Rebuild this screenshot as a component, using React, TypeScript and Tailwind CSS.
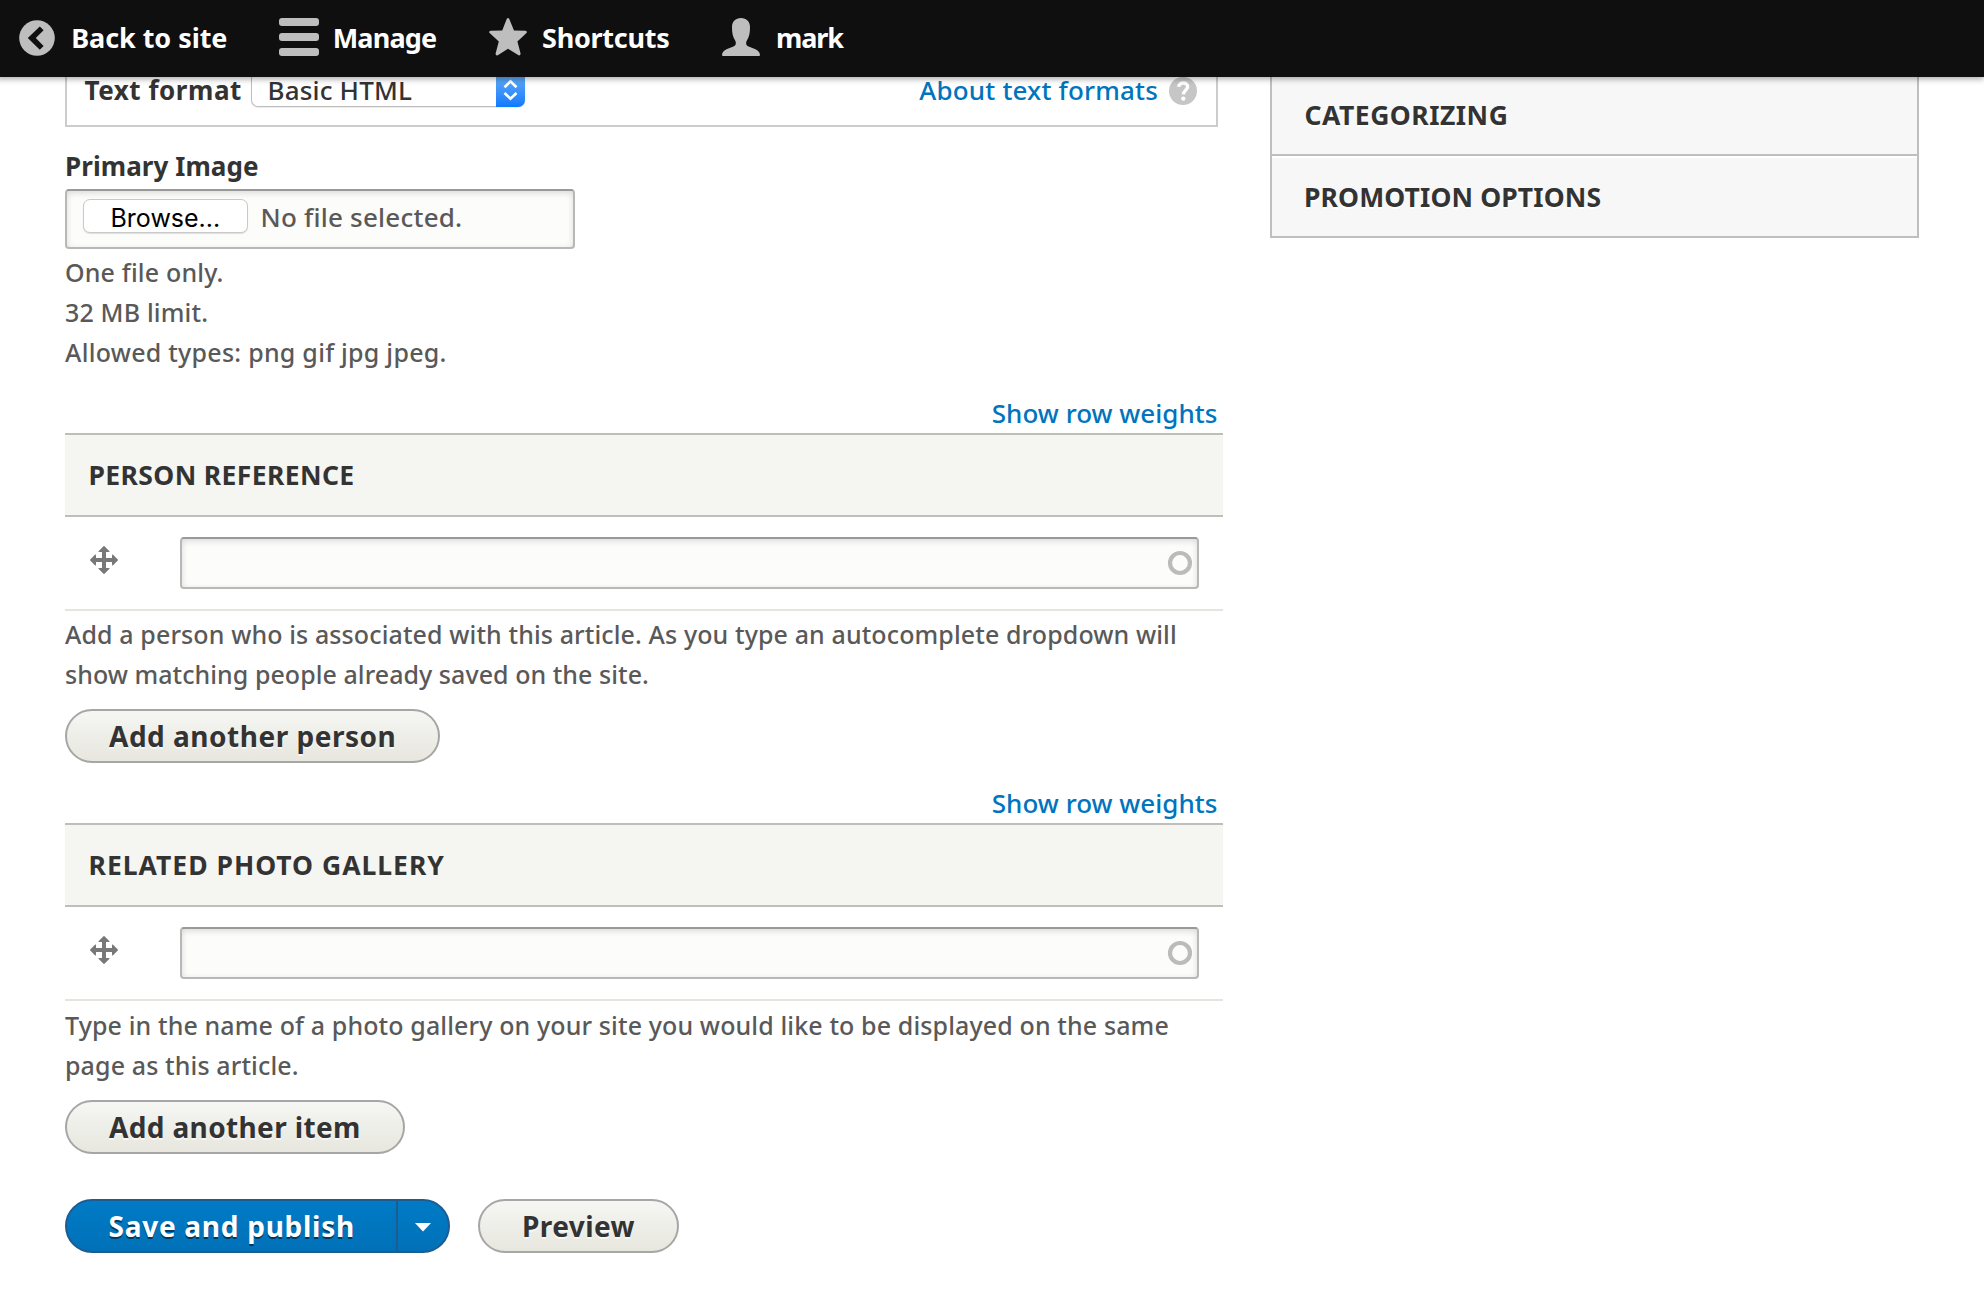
import type { ReactNode } from 'react';

function BackIcon() {
  return (
    <svg width="36" height="36" viewBox="0 0 36 36" className="shrink-0">
      <circle cx="18" cy="18" r="17.8" fill="#bebebe" />
      <path d="M8.8 18 L20.8 6.4 L24.6 10.2 L16.8 18 L24.6 26 L20.8 29.8 Z" fill="#0f0f0f" />
    </svg>
  );
}

function MenuIcon() {
  return (
    <svg width="40" height="38" viewBox="0 0 40 38" fill="#bebebe" className="shrink-0">
      <rect y="0" width="40" height="8" rx="3" />
      <rect y="15" width="40" height="8" rx="3" />
      <rect y="30" width="40" height="8" rx="3" />
    </svg>
  );
}

function StarIcon() {
  return (
    <svg width="38" height="38" viewBox="0 0 38 38" className="shrink-0">
      <path
        d="M17.7 1 Q19 -.8 20.3 1 L25 12.6 L36.6 12.8 Q38.8 13.4 37.2 15.3 L28.4 23.6 L31.6 35.4 Q31.7 37.9 29.6 37.3 L19 30.8 L8.8 37.3 Q6.4 37.9 6.6 35.4 L9.8 23.6 L.9 15.3 Q-.8 13.4 1.5 12.8 L13.2 12.6 Z"
        fill="#bebebe"
      />
    </svg>
  );
}

function PersonIcon() {
  return (
    <svg width="38" height="38" viewBox="0 0 38 38" className="shrink-0">
      <path
        d="M19 0 C24.5 0 28 3.6 28 9 C28 14.5 27.3 19 25 22.2 C23.6 24.5 23.8 27.4 26.6 28.6 L33.5 31.2 C36.5 32.6 37.8 34.4 38 37 Q38 38 37 38 L1 38 Q0 38 0 37 C.2 34.4 1.5 32.6 4.5 31.2 L11.4 28.6 C14.2 27.4 14.4 24.5 13 22.2 C10.7 19 10 14.5 10 9 C10 3.6 13.5 0 19 0 Z"
        fill="#bebebe"
      />
    </svg>
  );
}

function MoveIcon() {
  return (
    <svg width="32" height="32" viewBox="0 0 16 16" className="shrink-0">
      <path
        fill="#787878"
        d="M14.904 7.753l-2.373-2.372c-.291-.292-.529-.193-.529.22v1.399h-3v-3h1.398c.414 0 .512-.239.221-.53l-2.371-2.372c-.137-.136-.36-.136-.497 0l-2.372 2.372c-.292.292-.193.53.22.53h1.399v3h-3v-1.369c0-.413-.239-.511-.53-.22l-2.372 2.372c-.136.136-.136.359 0 .494l2.372 2.372c.291.292.53.193.53-.22v-1.429h3v3h-1.4c-.413 0-.511.238-.22.529l2.374 2.373c.137.137.36.137.495 0l2.373-2.373c.29-.291.19-.529-.222-.529h-1.398v-3h3v1.4c0 .412.238.511.529.219l2.373-2.371c.137-.137.137-.359 0-.495z"
      />
    </svg>
  );
}

const fieldStyle =
  'rounded-[4px] border-2 border-[#b8b8b8] border-t-[#999999] bg-[#fcfcfa] shadow-[inset_0_2px_6px_rgba(0,0,0,0.14)]';

const grayButton =
  'block h-[54px] rounded-full border-2 border-[#a6a6a6] bg-linear-to-b from-[#f6f6f3] to-[#e7e7df] text-left text-[28px] leading-[50px] font-bold whitespace-nowrap text-[#333333] [text-shadow:0_2px_0_rgba(255,255,255,0.6)]';

interface ReferenceFieldProps {
  title: string;
  titleClass: string;
  children: ReactNode;
}

function ReferenceField({ title, titleClass, children }: ReferenceFieldProps) {
  return (
    <>
      <div className="mb-[2px] flex justify-end pr-[5.5px]">
        <a className="text-[26px] leading-[36px] font-medium tracking-[0.03px] text-[#0074bd]">Show row weights</a>
      </div>
      <div className="flex h-[84px] items-center border-y-2 border-[#bfbfba] bg-[#f5f5f2] pl-[23.5px]">
        <h4 className={`text-[26.5px] leading-[80px] font-bold text-[#333333] ${titleClass}`}>{title}</h4>
      </div>
      <div className="flex h-[94px] items-start border-b-2 border-[#e6e4df] pl-[23px]">
        <div className="mt-[27px] w-[92px]">
          <MoveIcon />
        </div>
        <div className={`mt-5 flex h-[52px] w-[1018.5px] items-center justify-end pr-[4px] ${fieldStyle}`}>
          <svg width="26" height="26" viewBox="0 0 26 26">
            <circle cx="13" cy="13" r="10" fill="none" stroke="#bbbbbb" strokeWidth="4.2" />
          </svg>
        </div>
      </div>
      {children}
    </>
  );
}

export default function App() {
  return (
    <div className="h-[1298px] w-[1984px] overflow-hidden bg-white font-['Noto_Sans','Open_Sans',sans-serif]">
      <header className="relative z-10 flex h-[77px] bg-[#0f0f0f] pl-[19px] text-[27px] leading-[76px] font-bold whitespace-nowrap text-white shadow-[-2px_0_6px_2px_rgba(0,0,0,0.34)]">
        <a className="flex w-[260px] gap-[16.2px] tracking-[-0.06px]">
          <span className="pt-[20px]"><BackIcon /></span>Back to site
        </a>
        <a className="flex w-[210px] gap-[13.7px] tracking-[-0.8px]">
          <span className="pt-[18px]"><MenuIcon /></span>Manage
        </a>
        <a className="flex w-[233px] gap-[15px] tracking-[-0.25px]">
          <span className="pt-[18px]"><StarIcon /></span>Shortcuts
        </a>
        <a className="flex gap-[16px] tracking-[-1.1px]">
          <span className="pt-[18px]"><PersonIcon /></span>mark
        </a>
      </header>

      <main className="flex items-start">
        <section className="ml-[65px] w-[1158px]">
          <div className="flex h-[50px] w-[1153px] items-start border-x-2 border-b-2 border-[#cccccc] pl-[17.5px] text-[26px] leading-[26px] whitespace-nowrap">
            <span className="w-[166.5px] font-bold tracking-[0.54px] text-[#333333]">Text format</span>
            <div className="flex h-[30px] w-[274px] rounded-b-[7px] border-b border-l border-[#bdbdbd] shadow-[0_1px_1px_rgba(0,0,0,0.08)]">
              <span className="w-[244px] pl-[15.5px] font-medium tracking-[0.17px] text-[#333333]">Basic HTML</span>
              <span className="flex h-[30px] w-[29px] justify-center rounded-br-[7px] bg-linear-to-b from-[#5ba7f6] to-[#0a7aff] pt-[2px]">
                <svg width="15" height="22" viewBox="0 0 15 22" fill="none" stroke="#ffffff" strokeWidth="2.6">
                  <path d="M1.5 8.3 L7.5 2.4 L13.5 8.3 M1.5 14 L7.5 19.8 L13.5 14" />
                </svg>
              </span>
            </div>
            <a className="ml-auto font-medium tracking-[0.18px] text-[#0074bd]">About text formats</a>
            <svg width="28" height="28" viewBox="0 0 28 28" className="mr-[19px] ml-[11px] shrink-0">
              <circle cx="14" cy="14" r="14" fill="#c6c6c6" />
              <path d="M9.6 9.8 C10.2 4.6 18.8 4.8 18.6 9.8 C18.5 13 14.6 13.4 14.4 17.4" fill="none" stroke="#ffffff" strokeWidth="3.4" />
              <circle cx="14.3" cy="21.6" r="2.2" fill="#ffffff" />
            </svg>
          </div>

          <h4 className="mt-[19px] text-[26px] leading-[40px] font-bold tracking-[0.07px] text-[#333333]">Primary Image</h4>
          <div className={`mt-[3px] flex h-[60px] w-[510px] items-start pl-[16px] ${fieldStyle}`}>
            <span className="mt-[8px] h-[34px] w-[165px] rounded-[7px] border border-[#c9c9c9] bg-white pl-[26.5px] font-['Inter',sans-serif] text-[25px] leading-[36px] text-black shadow-[0_1px_1px_rgba(0,0,0,0.12)]">
              Browse...
            </span>
            <span className="ml-[12.5px] text-[26px] leading-[52px] font-medium tracking-[0.22px] text-[#595959]">No file selected.</span>
          </div>
          <div className="mt-[3px] text-[25px] leading-[40px] font-medium tracking-[0.17px] text-[#595959]">
            <p>One file only.</p>
            <p>32 MB limit.</p>
            <p className="tracking-[0.26px]">Allowed types: png gif jpg jpeg.</p>
          </div>

          <div className="mt-[23px]">
            <ReferenceField title="PERSON REFERENCE" titleClass="tracking-[0.38px]">
              <p className="mt-[3px] text-[25px] leading-[40px] font-medium tracking-[0.11px] whitespace-nowrap text-[#595959]">
                Add a person who is associated with this article. As you type an autocomplete dropdown will
                <br />
                <span className="tracking-[0.05px]">show matching people already saved on the site.</span>
              </p>
              <button className={`mt-[15px] w-[375px] pl-[42px] tracking-[0.51px] ${grayButton}`}>Add another person</button>
            </ReferenceField>
          </div>

          <div className="mt-[22px]">
            <ReferenceField title="RELATED PHOTO GALLERY" titleClass="tracking-[1px]">
              <p className="mt-[4px] text-[25px] leading-[40px] font-medium tracking-[0.12px] whitespace-nowrap text-[#595959]">
                Type in the name of a photo gallery on your site you would like to be displayed on the same
                <br />
                page as this article.
              </p>
              <button className={`mt-[15px] w-[340px] pl-[42px] tracking-[0.36px] ${grayButton}`}>Add another item</button>
            </ReferenceField>
          </div>

          <div className="mt-[45px] flex">
            <div className="flex h-[54px] w-[385px] rounded-full border-2 border-[#1e5c90] bg-linear-to-b from-[#007bc6] to-[#0071b8]">
              <button className="w-[331px] border-r-2 border-[#1e5c90] pl-[41.5px] text-left text-[28px] leading-[50px] font-bold tracking-[0.73px] whitespace-nowrap text-white [text-shadow:0_2px_0_rgba(0,0,0,0.5)]">
                Save and publish
              </button>
              <button className="pt-[3px] pl-[17px]">
                <svg width="16" height="9" viewBox="0 0 16 9">
                  <path d="M0 0 H16 L8 8.6 Z" fill="#ffffff" />
                </svg>
              </button>
            </div>
            <button className={`ml-[28px] w-[201px] pl-[42px] tracking-[0.41px] ${grayButton}`}>Preview</button>
          </div>
        </section>

        <aside className="ml-[47px] w-[649px] border-x-2 border-b-2 border-[#bfbfbf] bg-[#f7f7f7] text-[26.5px] font-bold text-[#333333] [text-shadow:0_2px_0_#ffffff]">
          <div className="h-[79px] border-b-2 border-[#bfbfbf] pl-[32.5px] leading-[76px] tracking-[0.5px]">CATEGORIZING</div>
          <div className="h-[80px] border-t-2 border-white pl-[32px] leading-[78px] tracking-[0.12px]">PROMOTION OPTIONS</div>
        </aside>
      </main>
    </div>
  );
}
